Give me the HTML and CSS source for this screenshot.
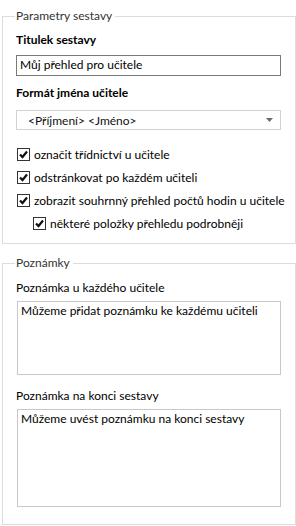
FILE: index.html
```html
<!DOCTYPE html>
<html lang="cs">
<head>
<meta charset="utf-8">
<link rel="stylesheet" href="styles.css">
</head>
<body>
<fieldset class="group group-params">
  <legend class="legend">Parametry sestavy</legend>
  <div class="label label-title">Titulek sestavy</div>
  <div class="input">Můj přehled pro učitele</div>
  <div class="label label-format">Formát jména učitele</div>
  <div class="select">
    <span>&lt;Příjmení&gt; &lt;Jméno&gt;</span>
    <svg class="arrow" width="7" height="4" viewBox="0 0 7 4"><path d="M0 0H7L3.5 4Z" fill="#6d6d6d"/></svg>
  </div>
  <div class="checks">
    <div class="check"><span class="box"><svg width="11" height="11" viewBox="0 0 11 11"><path d="M2 5.5L4.5 8L9 2.5" fill="none" stroke="#111" stroke-width="2.2"/></svg></span>označit třídnictví u učitele</div>
    <div class="check"><span class="box"><svg width="11" height="11" viewBox="0 0 11 11"><path d="M2 5.5L4.5 8L9 2.5" fill="none" stroke="#111" stroke-width="2.2"/></svg></span>odstránkovat po každém učiteli</div>
    <div class="check"><span class="box"><svg width="11" height="11" viewBox="0 0 11 11"><path d="M2 5.5L4.5 8L9 2.5" fill="none" stroke="#111" stroke-width="2.2"/></svg></span>zobrazit souhrnný přehled počtů hodin u učitele</div>
    <div class="check check-sub"><span class="box"><svg width="11" height="11" viewBox="0 0 11 11"><path d="M2 5.5L4.5 8L9 2.5" fill="none" stroke="#111" stroke-width="2.2"/></svg></span>některé položky přehledu podrobněji</div>
  </div>
</fieldset>
<fieldset class="group group-notes">
  <legend class="legend">Poznámky</legend>
  <div class="label-plain label-note1">Poznámka u každého učitele</div>
  <div class="area area-1">Můžeme přidat poznámku ke každému učiteli</div>
  <div class="label-plain label-note2">Poznámka na konci sestavy</div>
  <div class="area area-2">Můžeme uvést poznámku na konci sestavy</div>
</fieldset>
</body>
</html>
```
FILE: styles.css
```css
html, body {
  margin: 0;
  padding: 0;
  background: #fff;
}
body {
  font-family: Lato, "Noto Sans", sans-serif;
  font-size: 12px;
  line-height: 16px;
  color: #000;
  width: 296px;
  height: 526px;
  overflow: hidden;
  white-space: nowrap;
}
.group {
  box-sizing: border-box;
  width: 294px;
  margin: 0 0 0 2px;
  border: 1px solid #dcdcdc;
  padding: 0 0 0 13px;
  min-width: 0;
}
.group-params {
  margin-top: 8px;
  padding-bottom: 8px;
}
.group-notes {
  margin-top: 11px;
  padding-bottom: 17px;
}
.legend {
  padding: 0 3px 0 1px;
  margin-left: -1px;
  color: #333;
  line-height: 16px;
}
.label {
  font-weight: 700;
  color: #000;
}
.label-title { margin-top: 8px; }
.label-format { margin-top: 9px; }
.input {
  box-sizing: border-box;
  width: 265px;
  height: 21px;
  margin-top: 7px;
  border: 1px solid #7a7a7a;
  padding: 1px 0 0 3px;
  color: #000;
}
.select {
  box-sizing: border-box;
  width: 265px;
  height: 20px;
  margin-top: 9px;
  border: 1px solid #d2d2d2;
  padding: 1px 0 0 11px;
  display: flex;
  justify-content: space-between;
  align-items: center;
  color: #111;
}
.select .arrow {
  margin-right: 7px;
  margin-top: -1px;
}
.checks {
  margin-top: 13px;
  display: flex;
  flex-direction: column;
}
.check {
  height: 23px;
  display: flex;
  align-items: center;
  color: #000;
}
.check-sub { padding-left: 16px; }
.box {
  box-sizing: border-box;
  width: 13px;
  height: 13px;
  border: 1px solid #333;
  background: #fff;
  margin: 0 4px 0 1px;
  display: flex;
  align-items: center;
  justify-content: center;
  flex: none;
}
.label-plain { color: #000; }
.label-note1 { margin-top: 9px; }
.label-note2 { margin-top: 13px; }
.area {
  box-sizing: border-box;
  width: 264px;
  margin-left: 1px;
  margin-top: 5px;
  border: 1px solid #c8c8c8;
  padding: 1px 0 0 3px;
}
.area-1 { height: 74px; }
.area-2 { height: 98px; }
```
